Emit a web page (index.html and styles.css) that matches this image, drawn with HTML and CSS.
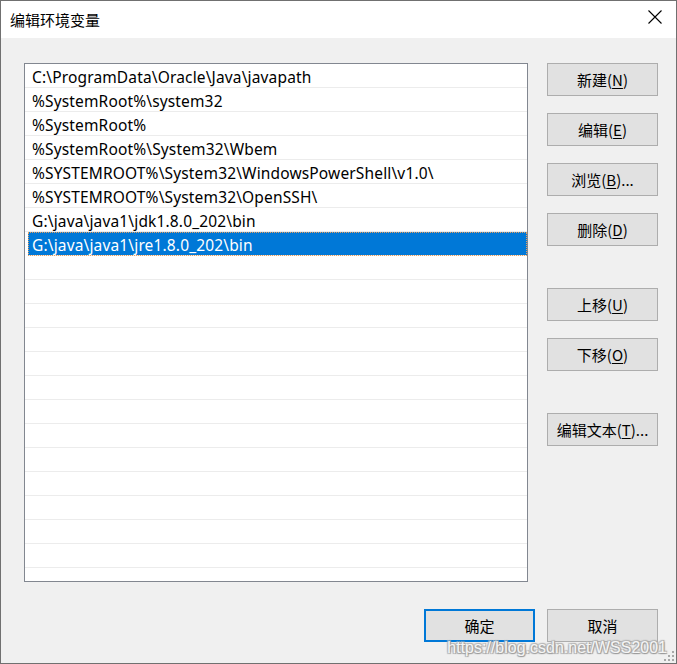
FILE: index.html
```html
<!DOCTYPE html>
<html lang="zh-CN">
<head>
    <meta charset="UTF-8">
    <title>编辑环境变量</title>
    <link rel="stylesheet" href="styles.css">
</head>
<body>
    <div class="window">
        <!-- Title bar -->
        <div class="titlebar">
            <span class="title">编辑环境变量</span>
            <span class="close">
                <svg width="14" height="14" viewBox="0 0 14 14">
                    <path d="M0.5 0.5 L13.5 13.5 M13.5 0.5 L0.5 13.5" stroke="#000" stroke-width="1.1" fill="none"/>
                </svg>
            </span>
        </div>

        <div class="content">
            <div class="main">
                <!-- Path list -->
                <ul class="path-list">
                    <li class="row">C:\ProgramData\Oracle\Java\javapath</li>
                    <li class="row">%SystemRoot%\system32</li>
                    <li class="row">%SystemRoot%</li>
                    <li class="row">%SystemRoot%\System32\Wbem</li>
                    <li class="row">%SYSTEMROOT%\System32\WindowsPowerShell\v1.0\</li>
                    <li class="row">%SYSTEMROOT%\System32\OpenSSH\</li>
                    <li class="row">G:\java\java1\jdk1.8.0_202\bin</li>
                    <li class="row selected">G:\java\java1\jre1.8.0_202\bin</li>
                    <li class="row"></li>
                    <li class="row"></li>
                    <li class="row"></li>
                    <li class="row"></li>
                    <li class="row"></li>
                    <li class="row"></li>
                    <li class="row"></li>
                    <li class="row"></li>
                    <li class="row"></li>
                    <li class="row"></li>
                    <li class="row"></li>
                    <li class="row"></li>
                    <li class="row"></li>
                    <li class="row"></li>
                </ul>

                <!-- Side buttons -->
                <div class="side-buttons">
                    <button class="btn">新建(<u>N</u>)</button>
                    <button class="btn">编辑(<u>E</u>)</button>
                    <button class="btn">浏览(<u>B</u>)...</button>
                    <button class="btn">删除(<u>D</u>)</button>
                    <button class="btn group-start">上移(<u>U</u>)</button>
                    <button class="btn">下移(<u>O</u>)</button>
                    <button class="btn group-start">编辑文本(<u>T</u>)...</button>
                </div>
            </div>

            <!-- Dialog buttons -->
            <div class="footer">
                <button class="btn default">确定</button>
                <button class="btn">取消</button>
            </div>

            <div class="watermark">https://blog.csdn.net/WSS2001</div>

            <svg class="grip" width="11" height="11" viewBox="0 0 11 11">
                <rect x="8" y="0" width="2" height="2" fill="#a8a8a8"/>
                <rect x="4" y="4" width="2" height="2" fill="#a8a8a8"/>
                <rect x="8" y="4" width="2" height="2" fill="#a8a8a8"/>
                <rect x="0" y="8" width="2" height="2" fill="#a8a8a8"/>
                <rect x="4" y="8" width="2" height="2" fill="#a8a8a8"/>
                <rect x="8" y="8" width="2" height="2" fill="#a8a8a8"/>
            </svg>
        </div>
    </div>
</body>
</html>
```

FILE: styles.css
```css
body {
    margin: 0;
    padding: 0;
    background-color: #f0f0f0;
    font-family: 'Noto Sans', 'Noto Sans CJK SC', sans-serif;
    color: #000;
}

.window {
    width: 677px;
    height: 664px;
    box-sizing: border-box;
    border: 1px solid #707070;
    display: flex;
    flex-direction: column;
    overflow: hidden;
}

.titlebar {
    height: 37px;
    flex: none;
    background-color: #fff;
    display: flex;
    align-items: center;
    justify-content: space-between;
    padding: 0 14px 0 9px;
}

.title {
    font-family: 'Noto Sans CJK SC', sans-serif;
    font-size: 15px;
    margin-top: -1px;
}

.close {
    display: flex;
    margin-top: -6px;
}

.content {
    flex: 1;
    position: relative;
    background-color: #f0f0f0;
    padding: 25px 18px 0 23px;
}

.main {
    display: flex;
    gap: 19px;
}

.path-list {
    list-style: none;
    margin: 0;
    padding: 0;
    width: 504px;
    height: 519px;
    box-sizing: border-box;
    border: 1px solid #828790;
    background-color: #fff;
    overflow: hidden;
}

.row {
    height: 23px;
    line-height: 26px;
    overflow: hidden;
    border-bottom: 1px solid #ececec;
    padding-left: 7px;
    font-size: 15.5px;
    letter-spacing: 0.15px;
    white-space: nowrap;
}

.row.selected {
    background-color: #0078d7;
    color: #fff;
    margin-left: 3px;
    padding-left: 4px;
    outline: 1px dotted #e8a060;
    outline-offset: -1px;
}

.side-buttons {
    display: flex;
    flex-direction: column;
    gap: 17px;
}

.btn {
    width: 111px;
    height: 33px;
    box-sizing: border-box;
    background-color: #e1e1e1;
    border: 1px solid #adadad;
    font-family: 'Noto Sans CJK SC', sans-serif;
    font-size: 15px;
    color: #000;
    padding: 0;
}

.btn u {
    text-underline-offset: 2px;
}

.group-start {
    margin-top: 25px;
}

.footer {
    display: flex;
    justify-content: flex-end;
    gap: 12px;
    margin-top: 27px;
}

.btn.default {
    border: 2px solid #0078d7;
}

/* Watermark over the corner */
.watermark {
    position: absolute;
    right: 9px;
    bottom: 6px;
    font-family: 'Liberation Sans', sans-serif;
    font-size: 16px;
    color: rgba(255, 255, 255, 0.9);
    text-shadow: 1px 1px 1px #999, -1px -1px 1px #bbb, 1px -1px 1px #aaa, -1px 1px 1px #aaa;
}

.grip {
    position: absolute;
    right: 1px;
    bottom: 1px;
}
```
